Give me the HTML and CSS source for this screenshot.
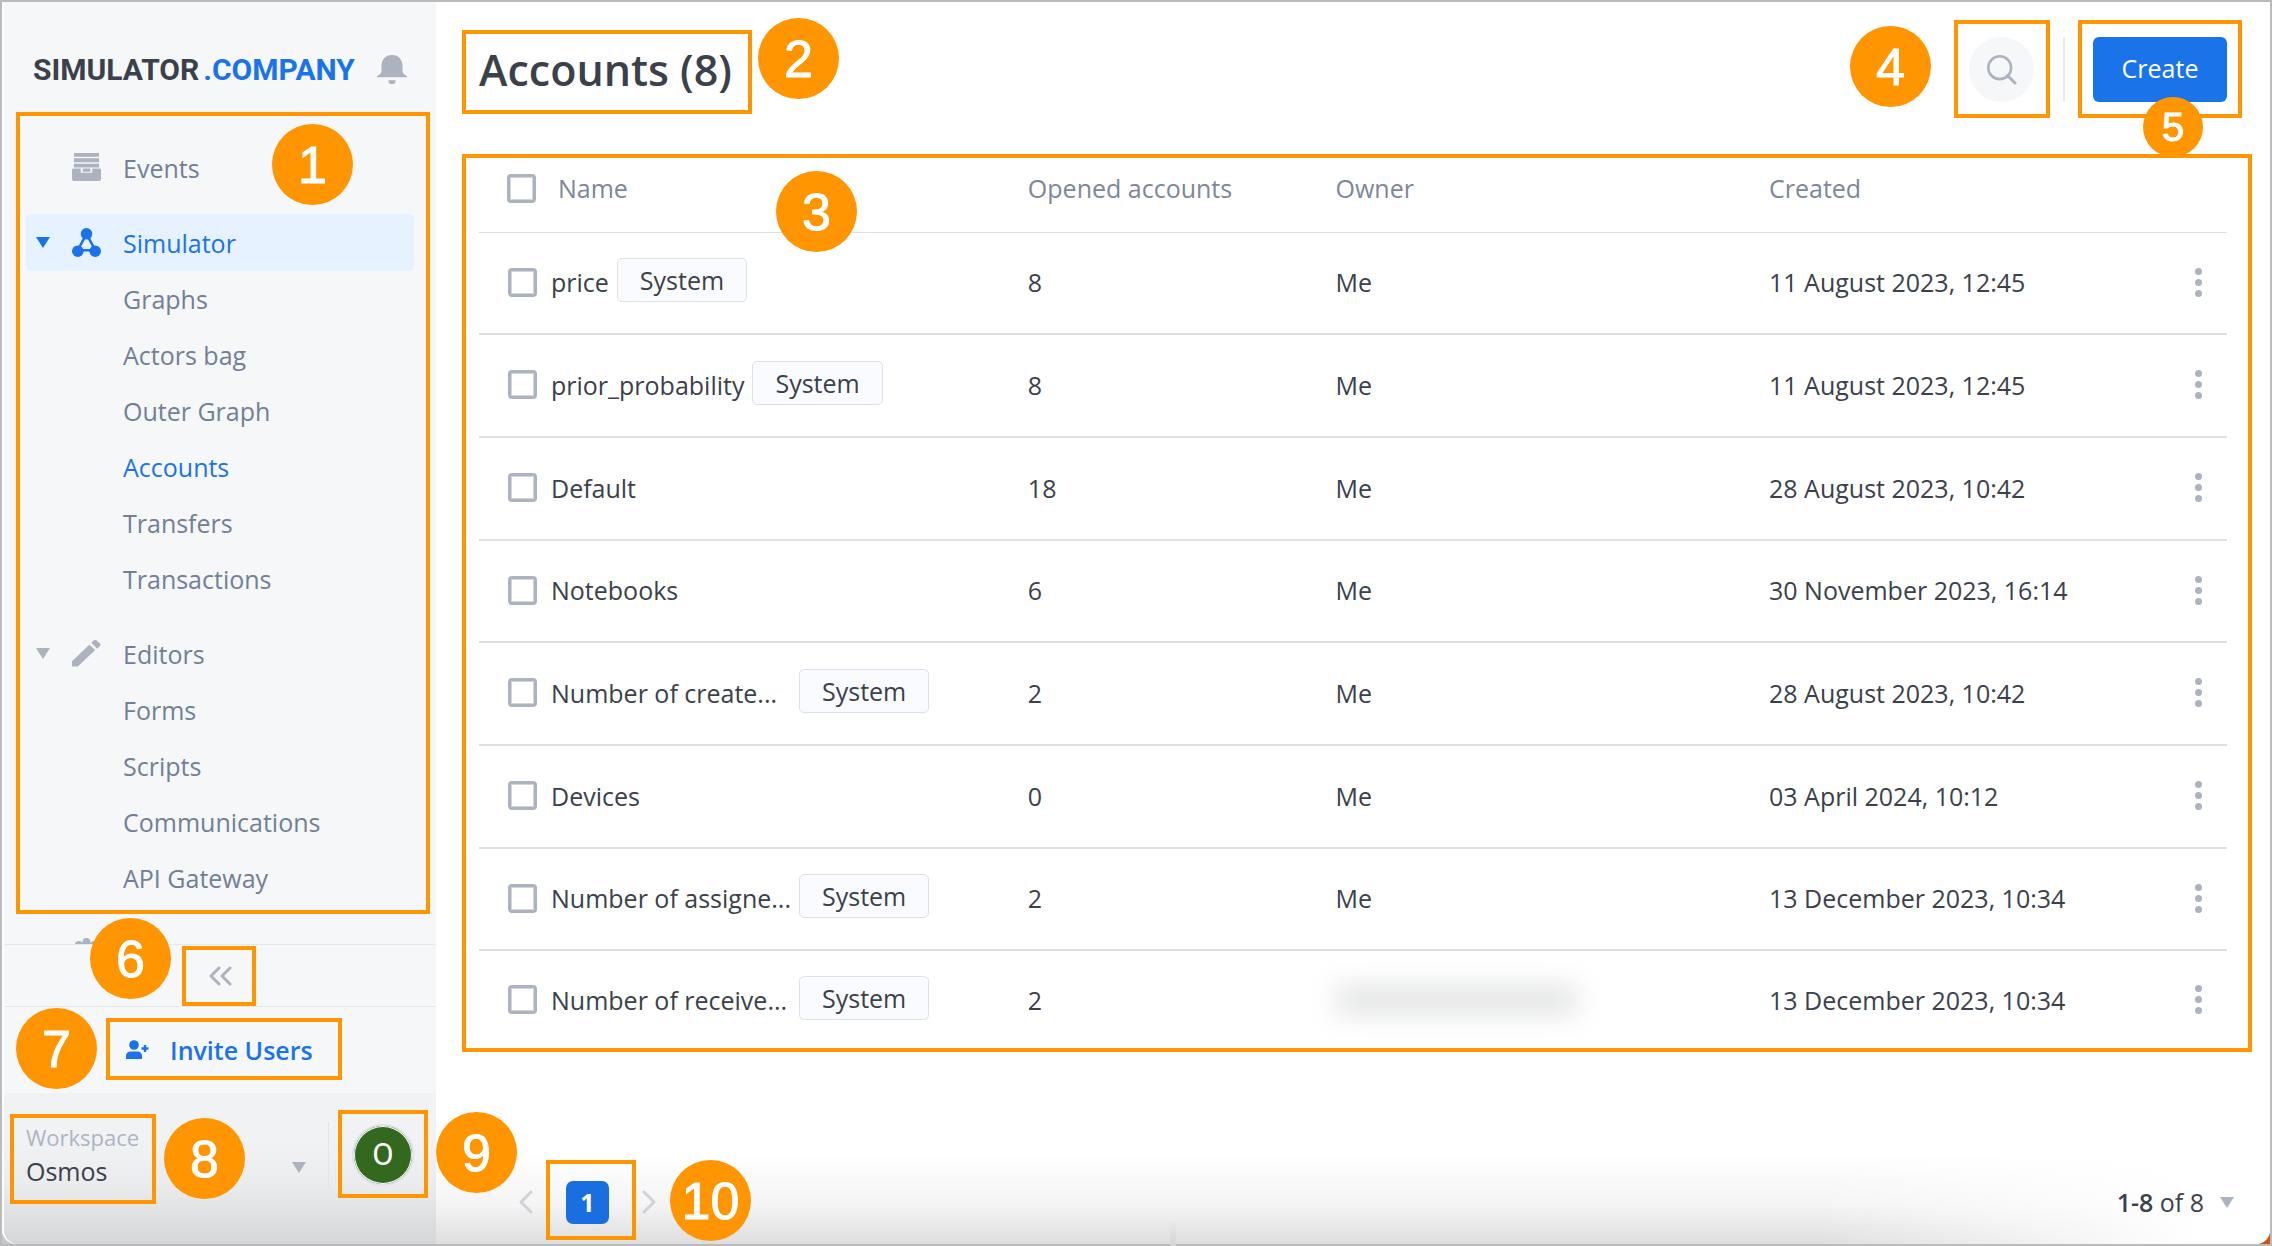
FILE: index.html
```html
<!DOCTYPE html>
<html lang="en">
<head>
<meta charset="utf-8">
<title>Accounts – Simulator.Company</title>
<link rel="stylesheet" href="styles.css">
</head>
<body>
<div class="app">
  <aside class="sidebar">
    <header class="brand">
      <a class="logo" href="#"><span>SIMULATOR</span><span class="logo-accent">.COMPANY</span></a>
      <button class="icon-button bell" aria-label="Notifications">
        <svg width="30" height="30" viewBox="0 0 30 30" fill="currentColor"><path d="M15 0C8.500 0 4.500 4.500 4.500 11v5c0 2-1.200 3.300-3.300 4.200-.8.300-1.200.9-1.200 2h30c0-1.100-.4-1.700-1.200-2-2.100-.9-3.300-2.200-3.300-4.200v-5C25.500 4.500 21.500 0 15 0z"/><path d="M11.300 25.200h7.400c0 2.600-1.600 3.900-3.700 3.900s-3.700-1.300-3.700-3.900z"/></svg>
      </button>
    </header>

    <div class="nav-area">
      <nav class="nav">
        <ul class="group">
          <li><a class="item top" href="#"><span class="caret-slot"></span>
            <svg class="ico" viewBox="0 0 30 30" fill="currentColor"><path d="M2 0h26v4H2zM2 5.500h26v4H2zM2 11h26v4H2z"/><path fill-rule="evenodd" d="M1.500 16H9v4.500h12V16h7.500q1.500 0 1.500 1.500V26q0 3-3 3H3q-3 0-3-3v-8.500Q0 16 1.500 16zM11 16h8v3.500h-8z"/></svg>
            Events</a></li>
        </ul>
        <ul class="group">
          <li><a class="item top selected" href="#"><span class="caret-slot"><i class="caret"></i></span>
            <svg class="ico" viewBox="0 0 30 30" fill="currentColor"><path d="M15 6L6 23h18z" fill="none" stroke="currentColor" stroke-width="2.600"/><circle cx="15" cy="6" r="6"/><circle cx="6" cy="24" r="6"/><circle cx="24" cy="24" r="6"/></svg>
            Simulator</a></li>
          <li><a class="item" href="#">Graphs</a></li>
          <li><a class="item" href="#">Actors bag</a></li>
          <li><a class="item" href="#">Outer Graph</a></li>
          <li><a class="item current" href="#">Accounts</a></li>
          <li><a class="item" href="#">Transfers</a></li>
          <li><a class="item" href="#">Transactions</a></li>
        </ul>
        <ul class="group">
          <li><a class="item top" href="#"><span class="caret-slot"><i class="caret"></i></span>
            <svg class="ico" viewBox="0 0 30 30" fill="currentColor"><path d="M0 23L18 6l6 5.500L6 28.500H0zM20 4l2.500-2.500q1.500-1.200 3 0l3.200 3q1.600 1.500 0 3L26 10z"/></svg>
            Editors</a></li>
          <li><a class="item" href="#">Forms</a></li>
          <li><a class="item" href="#">Scripts</a></li>
          <li><a class="item" href="#">Communications</a></li>
          <li><a class="item" href="#">API Gateway</a></li>
        </ul>
        <ul class="group">
          <li><a class="item top" href="#"><span class="caret-slot"></span>
            <svg class="ico" viewBox="0 0 30 30" fill="currentColor"><circle cx="15" cy="15" r="11"/><circle cx="15" cy="4" r="4"/><circle cx="7" cy="7" r="4"/><circle cx="23" cy="7" r="4"/><circle cx="4" cy="15" r="4"/><circle cx="26" cy="15" r="4"/></svg>
            Settings</a></li>
        </ul>
      </nav>
      <div class="frame f1"></div><span class="badge b1">1</span>
    </div>

    <div class="collapse">
      <button class="icon-button" aria-label="Collapse sidebar">
        <svg width="24" height="22" viewBox="0 0 24 22" fill="none" stroke="currentColor" stroke-width="3" stroke-linecap="round" stroke-linejoin="round"><path d="M11 3L3 11l8 8M22 3l-8 8 8 8"/></svg>
      </button>
      <div class="frame f6"></div><span class="badge b6">6</span>
    </div>

    <div class="invite">
      <button class="invite-button">
        <svg width="23" height="20" viewBox="0 0 23 20" fill="currentColor"><circle cx="8" cy="5" r="4.800"/><path d="M0 19v-3q0-4.500 5-4.500h6q5 0 5 4.500v3zM17.800 5h2.400v2.300h2.300v2.400h-2.300V12h-2.400V9.700h-2.300V7.300h2.300z"/></svg>
        Invite Users
      </button>
      <div class="frame f7"></div><span class="badge b7">7</span>
    </div>

    <footer class="workspace">
      <button class="workspace-picker">
        <span class="workspace-text"><span class="workspace-label">Workspace</span><span>Osmos</span></span>
        <i class="caret"></i>
      </button>
      <button class="avatar" aria-label="Profile">O</button>
      <div class="frame f8"></div><span class="badge b8">8</span>
      <div class="frame f9"></div><span class="badge b9">9</span>
    </footer>
  </aside>

  <main class="main">
    <header class="page-head">
      <h1>Accounts (8)</h1>
      <div class="actions">
        <button class="search" aria-label="Search">
          <svg width="30" height="30" viewBox="0 0 30 30" fill="none" stroke="currentColor" stroke-width="2.600" stroke-linecap="round"><circle cx="12.700" cy="12.700" r="11.400"/><path d="M20.500 20.500l7.500 7.500" stroke-width="3"/></svg>
        </button>
        <button class="create">Create</button>
        <div class="frame f4"></div><span class="badge b4">4</span>
        <div class="frame f5"></div><span class="badge small b5">5</span>
      </div>
      <div class="frame f2"></div><span class="badge b2">2</span>
    </header>

    <section class="list">
      <table>
        <colgroup><col class="c-name"><col class="c-opened"><col class="c-owner"><col class="c-created"><col class="c-menu"></colgroup>
        <thead>
          <tr><th><div class="cell head-cell"><input type="checkbox" aria-label="Select all">Name</div></th><th>Opened accounts</th><th>Owner</th><th>Created</th><th></th></tr>
        </thead>
        <tbody>
          <tr><td><div class="cell"><input type="checkbox" id="a1"><label for="a1">price</label><span class="tag">System</span></div></td><td>8</td><td>Me</td><td>11 August 2023, 12:45</td><td><button class="more" aria-label="More"><i></i><i></i><i></i></button></td></tr>
          <tr><td><div class="cell"><input type="checkbox" id="a2"><label for="a2">prior_probability</label><span class="tag">System</span></div></td><td>8</td><td>Me</td><td>11 August 2023, 12:45</td><td><button class="more" aria-label="More"><i></i><i></i><i></i></button></td></tr>
          <tr><td><div class="cell"><input type="checkbox" id="a3"><label for="a3">Default</label></div></td><td>18</td><td>Me</td><td>28 August 2023, 10:42</td><td><button class="more" aria-label="More"><i></i><i></i><i></i></button></td></tr>
          <tr><td><div class="cell"><input type="checkbox" id="a4"><label for="a4">Notebooks</label></div></td><td>6</td><td>Me</td><td>30 November 2023, 16:14</td><td><button class="more" aria-label="More"><i></i><i></i><i></i></button></td></tr>
          <tr><td><div class="cell"><input type="checkbox" id="a5"><label class="long" for="a5">Number of create...</label><span class="tag">System</span></div></td><td>2</td><td>Me</td><td>28 August 2023, 10:42</td><td><button class="more" aria-label="More"><i></i><i></i><i></i></button></td></tr>
          <tr><td><div class="cell"><input type="checkbox" id="a6"><label for="a6">Devices</label></div></td><td>0</td><td>Me</td><td>03 April 2024, 10:12</td><td><button class="more" aria-label="More"><i></i><i></i><i></i></button></td></tr>
          <tr><td><div class="cell"><input type="checkbox" id="a7"><label class="long" for="a7">Number of assigne...</label><span class="tag">System</span></div></td><td>2</td><td>Me</td><td>13 December 2023, 10:34</td><td><button class="more" aria-label="More"><i></i><i></i><i></i></button></td></tr>
          <tr><td><div class="cell"><input type="checkbox" id="a8"><label class="long" for="a8">Number of receive...</label><span class="tag">System</span></div></td><td>2</td><td><div class="hidden-owner"></div></td><td>13 December 2023, 10:34</td><td><button class="more" aria-label="More"><i></i><i></i><i></i></button></td></tr>
        </tbody>
      </table>
      <div class="frame f3"></div><span class="badge b3">3</span>
    </section>

    <footer class="pager">
      <div class="pages">
        <button class="icon-button arrow" aria-label="Previous page"><svg width="16" height="24" viewBox="0 0 16 24" fill="none" stroke="currentColor" stroke-width="3" stroke-linecap="round" stroke-linejoin="round"><path d="M13 2L3 12l10 10"/></svg></button>
        <button class="page-number">1</button>
        <button class="icon-button arrow" aria-label="Next page"><svg width="16" height="24" viewBox="0 0 16 24" fill="none" stroke="currentColor" stroke-width="3" stroke-linecap="round" stroke-linejoin="round"><path d="M3 2l10 10L3 22"/></svg></button>
      </div>
      <button class="range"><span><b>1-8</b> of 8</span><i class="caret"></i></button>
      <div class="frame f10"></div><span class="badge b10">10</span>
    </footer>
  </main>
</div>
</body>
</html>
```
FILE: styles.css
```css
* { box-sizing: border-box; }

body {
  margin: 0;
  font: 25px/36px "Open Sans", "Noto Sans", sans-serif;
  color: #3a414b;
}

button {
  font: inherit;
  color: inherit;
  background: none;
  border: 0;
  padding: 0;
}

a { color: inherit; text-decoration: none; }
ul { list-style: none; margin: 0; padding: 0; }
svg { display: block; flex: none; }

.app {
  display: flex;
  height: 100vh;
  border: 2px solid #bbb;
  background: linear-gradient(90deg, #c6c7c9 50%, #c8541f 50%);
}

/* Numbered callouts */
.frame {
  position: absolute;
  border: 4px solid #ff9500;
  pointer-events: none;
  z-index: 2;
}

.badge {
  position: absolute;
  display: flex;
  align-items: center;
  justify-content: center;
  width: 81px;
  height: 81px;
  border-radius: 50%;
  background: #ff9500;
  color: #fff;
  font: 52px/52px "Liberation Sans", Arial, sans-serif;
  -webkit-text-stroke: 1px #fff;
  z-index: 3;
}

.badge.small { width: 60px; height: 60px; font-size: 40px; line-height: 40px; }

/* Sidebar */
.sidebar {
  display: flex;
  flex-direction: column;
  flex: none;
  width: 434px;
  border-left: 2px solid #fff;
  border-bottom-left-radius: 14px;
  background: #f6f7f9;
  color: #718096;
}

.brand {
  display: flex;
  align-items: center;
  justify-content: space-between;
  height: 110px;
  padding: 26px 29px 0 29px;
}

.logo {
  display: flex;
  gap: 4px;
  font: bold 30px/36px Roboto, sans-serif;
  color: #3a414b;
}

.logo-accent { color: #1a73e8; }
.icon-button { color: #acb3bf; }

.nav-area {
  position: relative;
  flex: 1;
  min-height: 0;
}

.nav {
  display: flex;
  flex-direction: column;
  gap: 18px;
  height: 100%;
  padding: 27px 22px 0;
  overflow: hidden;
}

.item {
  display: flex;
  align-items: center;
  height: 56px;
  padding-left: 97px;
  border-radius: 5px;
}

.item.top { height: 57px; padding-left: 10px; }
.caret-slot { width: 36px; }
.ico { width: 29px; height: 29px; margin-right: 22px; color: #acb3bf; }

.caret {
  display: block;
  width: 0;
  border: 7px solid transparent;
  border-top: 11px solid #acb3bf;
  border-bottom: 0;
}

.selected { background: #e6f2ff; }
.selected, .current, .selected .ico { color: #1a73e8; }
.selected .caret { border-top-color: #1a73e8; }

.collapse, .invite {
  position: relative;
  display: flex;
  align-items: center;
  border-top: 1px solid #e6e8ec;
}

.collapse { justify-content: center; height: 62px; }
.invite { height: 87px; }

.invite-button {
  display: flex;
  align-items: center;
  gap: 21px;
  margin-left: 122px;
  font-weight: 600;
  color: #1a73e8;
}

.workspace {
  position: relative;
  display: flex;
  align-items: flex-start;
  height: 151px;
  padding: 29px 22px 0;
  border-bottom-left-radius: 14px;
  background: linear-gradient(#f1f2f4 30%, #ebecee 60%, #d5d6d8);
}

.workspace-picker {
  display: flex;
  align-items: center;
  justify-content: space-between;
  flex: 1;
  height: 65px;
  padding-right: 22px;
  border-right: 1px solid #e2e4e9;
  text-align: left;
  color: #3a414b;
}

.workspace-picker .caret { margin-top: 26px; }
.workspace-text { display: flex; flex-direction: column; }
.workspace-label { font-size: 22px; line-height: 32px; color: #adb5c2; }

.avatar {
  width: 62px;
  height: 62px;
  margin: 2px 0 0 23px;
  border: 2px solid #dfe2ea;
  border-radius: 50%;
  background: #33691e;
  box-shadow: inset 0 0 0 1px #fff;
  color: #fff;
  font: 31px/36px Roboto, sans-serif;
}

/* Main column */
.main {
  display: flex;
  flex-direction: column;
  flex: 1;
  min-width: 0;
  border-bottom-right-radius: 14px;
  background: #fff;
}

.page-head {
  position: relative;
  display: flex;
  align-items: center;
  justify-content: space-between;
  height: 152px;
  padding: 0 43px 17px;
}

h1 { margin: 0; font-size: 43px; line-height: 60px; font-weight: 600; }

.actions {
  position: relative;
  display: flex;
  align-items: center;
}

.search {
  display: grid;
  place-items: center;
  width: 65px;
  height: 65px;
  border-radius: 50%;
  background: #f6f7f9;
  color: #acb3bf;
}

.create {
  position: relative;
  width: 134px;
  height: 65px;
  margin-left: 59px;
  padding-bottom: 3px;
  border-radius: 6px;
  background: #1a73e8;
  color: #fff;
}

.create::before {
  content: "";
  position: absolute;
  left: -30px;
  top: 0;
  width: 2px;
  height: 100%;
  background: #e8eaef;
}

.list {
  position: relative;
  padding: 0 43px;
}

table {
  width: 100%;
  table-layout: fixed;
  border-collapse: separate;
  border-spacing: 0;
}

.c-name { width: 31.400%; }
.c-opened { width: 17.600%; }
.c-owner { width: 24.800%; }
.c-menu { width: 58px; }

th, td { padding: 0; text-align: left; }
th { height: 79px; padding-bottom: 10px; border-bottom: 1px solid #dcdee5; font-weight: 400; color: #7c879b; }
td { height: 103px; padding-bottom: 2px; border-bottom: 2px solid #dedfe5; }
tr:nth-child(3n + 1) td { height: 102px; }
tr:last-child td { height: 101px; border-bottom-color: transparent; }

.cell {
  display: flex;
  align-items: center;
  padding-left: 29px;
}

.head-cell { padding-left: 28px; gap: 8px; }
.long { min-width: 240px; }

input[type="checkbox"] {
  appearance: none;
  width: 29px;
  height: 29px;
  margin: 0 14px 0 0;
  border: 3px solid #acb3bf;
  border-radius: 4px;
  box-shadow: inset 0 0 0 1px #d2d6dc;
  background: #fff;
}

.tag {
  margin: 0 0 4px 8px;
  padding: 3px 22px;
  border: 1px solid #dfe1e8;
  border-radius: 5px;
  background: #fafbff;
}

.more {
  display: flex;
  flex-direction: column;
  gap: 4px;
  margin-left: 26px;
}

.more i { width: 7px; height: 7px; border-radius: 50%; background: #acb3bf; }

.hidden-owner {
  width: 242px;
  height: 28px;
  background: #e2e3e3;
  filter: blur(14px);
}

.pager {
  position: relative;
  display: flex;
  align-items: center;
  justify-content: space-between;
  height: 112px;
  margin-top: auto;
  padding: 28px 36px 0 82px;
  border-bottom-right-radius: 14px;
  background: linear-gradient(90deg, transparent 75%, #fff 96%), linear-gradient(#fff 20%, #f4f4f4 65%, #dedede);
}

/* Edge of the dock shadow below the window */
.pager::after {
  content: "";
  position: absolute;
  left: 40%;
  bottom: -2px;
  width: 6px;
  height: 24px;
  background: linear-gradient(#e8e8e8, #d4d4d4);
}

.pages { display: flex; align-items: center; gap: 32px; }
.arrow { color: #cfd2d9; }

.page-number {
  width: 43px;
  height: 43px;
  border-radius: 7px;
  background: #1a6fe0;
  color: #fff;
  font-weight: 700;
  font-size: 25px;
}

.range { display: flex; align-items: center; gap: 16px; }
.range b { font-weight: 600; }

/* Callout positions */
.f1 { inset: 0 6px 30px 12px; }
.b1 { left: 268px; top: 12px; }
.f2 { left: 26px; top: 28px; width: 290px; height: 84px; }
.b2 { left: 322px; top: 16px; }
.f3 { inset: 0 18px 0 26px; }
.b3 { left: 340px; top: 17px; }
.f4 { left: -15px; top: -17px; width: 96px; height: 98px; }
.b4 { left: -119px; top: -11px; }
.f5 { right: -15px; top: -17px; width: 164px; height: 98px; }
.b5 { right: 24px; top: 60px; }
.f6 { left: 178px; top: 1px; width: 74px; height: 60px; }
.b6 { left: 86px; top: -27px; }
.f7 { left: 102px; top: 11px; width: 236px; height: 62px; }
.b7 { left: 12px; top: 1px; }
.f8 { left: 6px; top: 21px; width: 146px; height: 90px; }
.b8 { left: 160px; top: 25px; }
.f9 { left: 334px; top: 17px; width: 90px; height: 88px; }
.b9 { left: 432px; top: 19px; }
.f10 { left: 110px; top: 28px; width: 90px; height: 80px; }
.b10 { left: 234px; top: 28px; }
```
